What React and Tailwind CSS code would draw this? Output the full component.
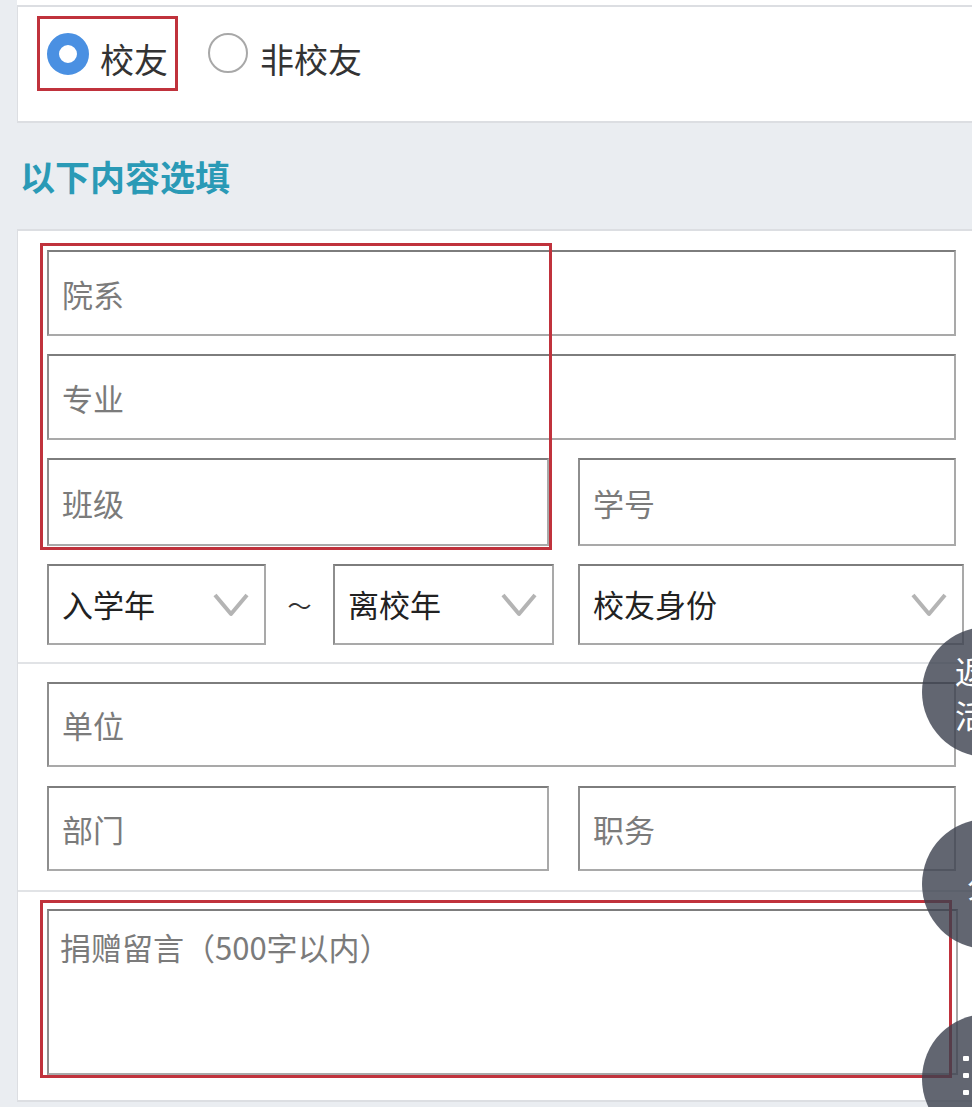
import React from 'react';

const boxBorder = 'border-2 border-[#a9a9a9] border-t-[#7d7d7d] border-l-[#8e8e8e] bg-white';

const Field = ({ label, className = '' }) => (
  <div className={`${boxBorder} flex items-center ${className}`}>
    <input
      placeholder={label}
      className="w-full h-full pl-[13px] bg-transparent outline-none text-[31px] text-[#333] placeholder:text-[#7b7b7b]"
    />
  </div>
);

const Chevron = () => (
  <svg width="38" height="26" viewBox="0 0 38 26" fill="none">
    <polyline points="3,3 19,22 35,3" stroke="#b4b4b4" strokeWidth="4" strokeLinejoin="round" />
  </svg>
);

const Select = ({ label, className = '' }) => (
  <div className={`${boxBorder} h-[81px] shrink-0 flex items-center justify-between pl-[13px] pr-[14px] ${className}`}>
    <span className="text-[31px] text-[#222]">{label}</span>
    <Chevron />
  </div>
);

const Radio = ({ checked }) =>
  checked ? (
    <span className="w-[42px] h-[42px] rounded-full border-[12px] border-[#4a90e2] bg-white shrink-0 mb-[10px]" />
  ) : (
    <span className="w-[40px] h-[40px] rounded-full border-2 border-[#a8a8a8] bg-white shrink-0 mb-[12px]" />
  );

export default function App() {
  return (
    <div className="relative w-[972px] h-[1107px] overflow-hidden bg-[#eaedf1] pl-[17px] font-['Noto_Sans_CJK_SC','Noto_Sans',sans-serif]">
      {/* sliver of previous card */}
      <div className="h-[5px] bg-white" />

      {/* alumni choice */}
      <div className="h-[118px] bg-white border-t-2 border-b-2 border-l border-[#dcdee2] pt-[9px] pl-[19px]">
        <div className="flex items-start">
          <label className="h-[75px] flex items-center gap-[11px] px-[7px] pt-[10px] border-[3px] border-[#c0323c]">
            <Radio checked />
            <span className="text-[34px] text-[#333]">校友</span>
          </label>
          <label className="h-[75px] flex items-center gap-[12px] ml-[27px] pt-[10px] border-[3px] border-transparent">
            <Radio />
            <span className="text-[34px] text-[#333]">非校友</span>
          </label>
        </div>
      </div>

      {/* section title */}
      <div className="h-[106px] flex items-center pl-[3px]">
        <h2 className="text-[35px] font-bold text-[#2a9ab6]">以下内容选填</h2>
      </div>

      {/* optional fields */}
      <div className="relative bg-white border-t-2 border-b-2 border-l border-[#dcdee2]">
        <div className="flex flex-col gap-[18px] pl-[29px] pr-[16px] pt-[19px] pb-[17px] border-b-2 border-[#e1e3e6]">
          <Field label="院系" className="h-[86px]" />
          <Field label="专业" className="h-[86px]" />
          <div className="flex gap-[29px]">
            <Field label="班级" className="h-[88px] w-[502px]" />
            <Field label="学号" className="h-[88px] flex-1" />
          </div>
          <div className="flex items-center">
            <Select label="入学年" className="w-[219px]" />
            <span className="w-[67px] shrink-0 text-center text-[24px] text-[#333]">～</span>
            <Select label="离校年" className="w-[221px]" />
            <Select label="校友身份" className="w-[386px] ml-[24px]" />
          </div>
        </div>

        <div className="flex flex-col gap-[19px] pl-[29px] pr-[16px] pt-[18px] pb-[19px] border-b-2 border-[#e1e3e6]">
          <Field label="单位" className="h-[85px]" />
          <div className="flex gap-[29px]">
            <Field label="部门" className="h-[85px] w-[502px]" />
            <Field label="职务" className="h-[85px] flex-1" />
          </div>
        </div>

        <div className="pl-[29px] pr-[14px] pt-[17px] pb-[25px]">
          <textarea
            placeholder="捐赠留言（500字以内）"
            className={`${boxBorder} block w-full h-[166px] resize-none outline-none pl-[11px] pt-[14px] text-[31px] leading-[44px] text-[#333] placeholder:text-[#7b7b7b]`}
          />
        </div>

        {/* annotation boxes */}
        <div className="absolute left-[22px] top-[12px] w-[512px] h-[307px] border-[3px] border-[#c0323c] pointer-events-none" />
        <div className="absolute left-[22px] top-[669px] w-[912px] h-[178px] border-[3px] border-[#c0323c] pointer-events-none" />
      </div>

      {/* floating buttons */}
      <div className="absolute left-[922px] top-[627px] w-[130px] h-[130px] rounded-full bg-[#3b404d]/80 flex flex-col justify-center pl-[33px] text-white text-[32px] leading-[44px]">
        <span>返回</span>
        <span>活动</span>
      </div>
      <div className="absolute left-[922px] top-[819px] w-[130px] h-[130px] rounded-full bg-[#3b404d]/80 flex items-center pl-[45px] text-white text-[30px]">
        <span>分享</span>
      </div>
      <div className="absolute left-[922px] top-[1014px] w-[130px] h-[130px] rounded-full bg-[#3b404d]/80">
        <svg className="absolute left-[41px] top-[40px]" width="40" height="44" viewBox="0 0 40 44" fill="#fff">
          <rect x="0" y="2" width="6" height="5" rx="1" />
          <rect x="0" y="19" width="6" height="5" rx="1" />
          <rect x="0" y="36" width="6" height="5" rx="1" />
          <rect x="10" y="2" width="30" height="5" rx="1" />
          <rect x="10" y="19" width="30" height="5" rx="1" />
          <rect x="10" y="36" width="30" height="5" rx="1" />
        </svg>
      </div>
    </div>
  );
}
